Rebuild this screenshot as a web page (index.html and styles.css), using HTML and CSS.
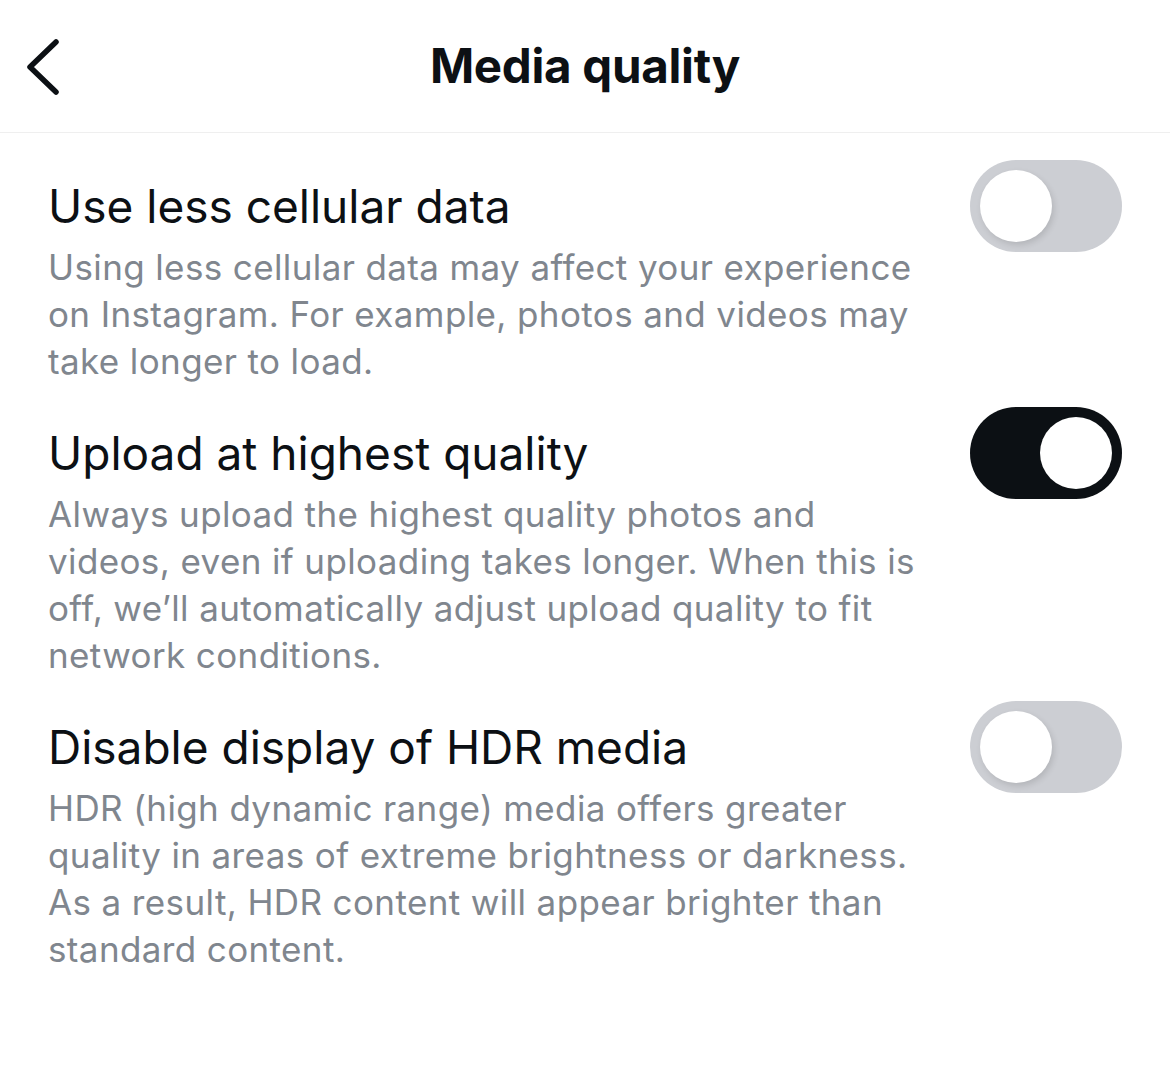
FILE: index.html
```html
<!DOCTYPE html>
<html lang="en">
<head>
<meta charset="utf-8">
<title>Media quality</title>
<link rel="stylesheet" href="styles.css">
</head>
<body>
<header class="header">
  <button class="back" aria-label="Back">
    <svg width="40" height="60" viewBox="0 0 40 60"><path d="M32 7 L6 32 L32 57" fill="none" stroke="#0c1014" stroke-width="5.5" stroke-linecap="round" stroke-linejoin="round"/></svg>
  </button>
  <h1 class="title">Media quality</h1>
</header>
<main class="list">
  <section class="row">
    <div class="text">
      <h2 class="row-title">Use less cellular data</h2>
      <p class="row-desc">Using less cellular data may affect your experience on Instagram. For example, photos and videos may take longer to load.</p>
    </div>
    <div class="toggle"><span class="knob"></span></div>
  </section>
  <section class="row">
    <div class="text">
      <h2 class="row-title">Upload at highest quality</h2>
      <p class="row-desc">Always upload the highest quality photos and videos, even if uploading takes longer. When this is off, we’ll automatically adjust upload quality to fit network conditions.</p>
    </div>
    <div class="toggle on"><span class="knob"></span></div>
  </section>
  <section class="row">
    <div class="text">
      <h2 class="row-title">Disable display of HDR media</h2>
      <p class="row-desc">HDR (high dynamic range) media offers greater quality in areas of extreme brightness or darkness. As a result, HDR content will appear brighter than standard content.</p>
    </div>
    <div class="toggle"><span class="knob"></span></div>
  </section>
</main>
</body>
</html>
```
FILE: styles.css
```css
* { box-sizing: border-box; }
html, body { margin: 0; padding: 0; background: #ffffff; }
body {
  font-family: Inter, "Noto Sans", sans-serif;
  color: #0c1014;
  width: 1170px;
}
.header {
  position: relative;
  height: 133px;
  border-bottom: 1px solid #efefef;
  display: flex;
  align-items: center;
  justify-content: center;
}
.back {
  position: absolute;
  left: 24px;
  top: 35px;
  border: 0;
  background: none;
  padding: 0;
  width: 40px;
  height: 60px;
}
.back svg { display: block; }
.title {
  margin: 0;
  font-size: 47.5px;
  font-weight: 700;
  letter-spacing: -0.3px;
  padding-bottom: 2px;
}
.list {
  padding: 43px 48px 0 48px;
  display: flex;
  flex-direction: column;
  gap: 38px;
}
.row {
  display: flex;
  justify-content: space-between;
  align-items: flex-start;
  gap: 30px;
}
.text { flex: 1; }
.row-title {
  margin: 0;
  font-size: 46px;
  font-weight: 400;
  line-height: 60px;
  letter-spacing: 0;
}
.row-desc {
  margin: 8px 0 0;
  font-size: 35px;
  line-height: 47px;
  color: #80868e;
  letter-spacing: 0.38px;
  max-width: 885px;
}
.toggle {
  flex: none;
  width: 152px;
  height: 92px;
  border-radius: 46px;
  background: #ccced3;
  position: relative;
  margin-top: -16px;
}
.knob {
  position: absolute;
  left: 10px;
  top: 10px;
  width: 72px;
  height: 72px;
  border-radius: 50%;
  background: #ffffff;
  box-shadow: 2px 3px 6px rgba(0,0,0,0.12);
}
.toggle.on { background: #0c1014; }
.toggle.on .knob { left: 70px; box-shadow: none; }
```
